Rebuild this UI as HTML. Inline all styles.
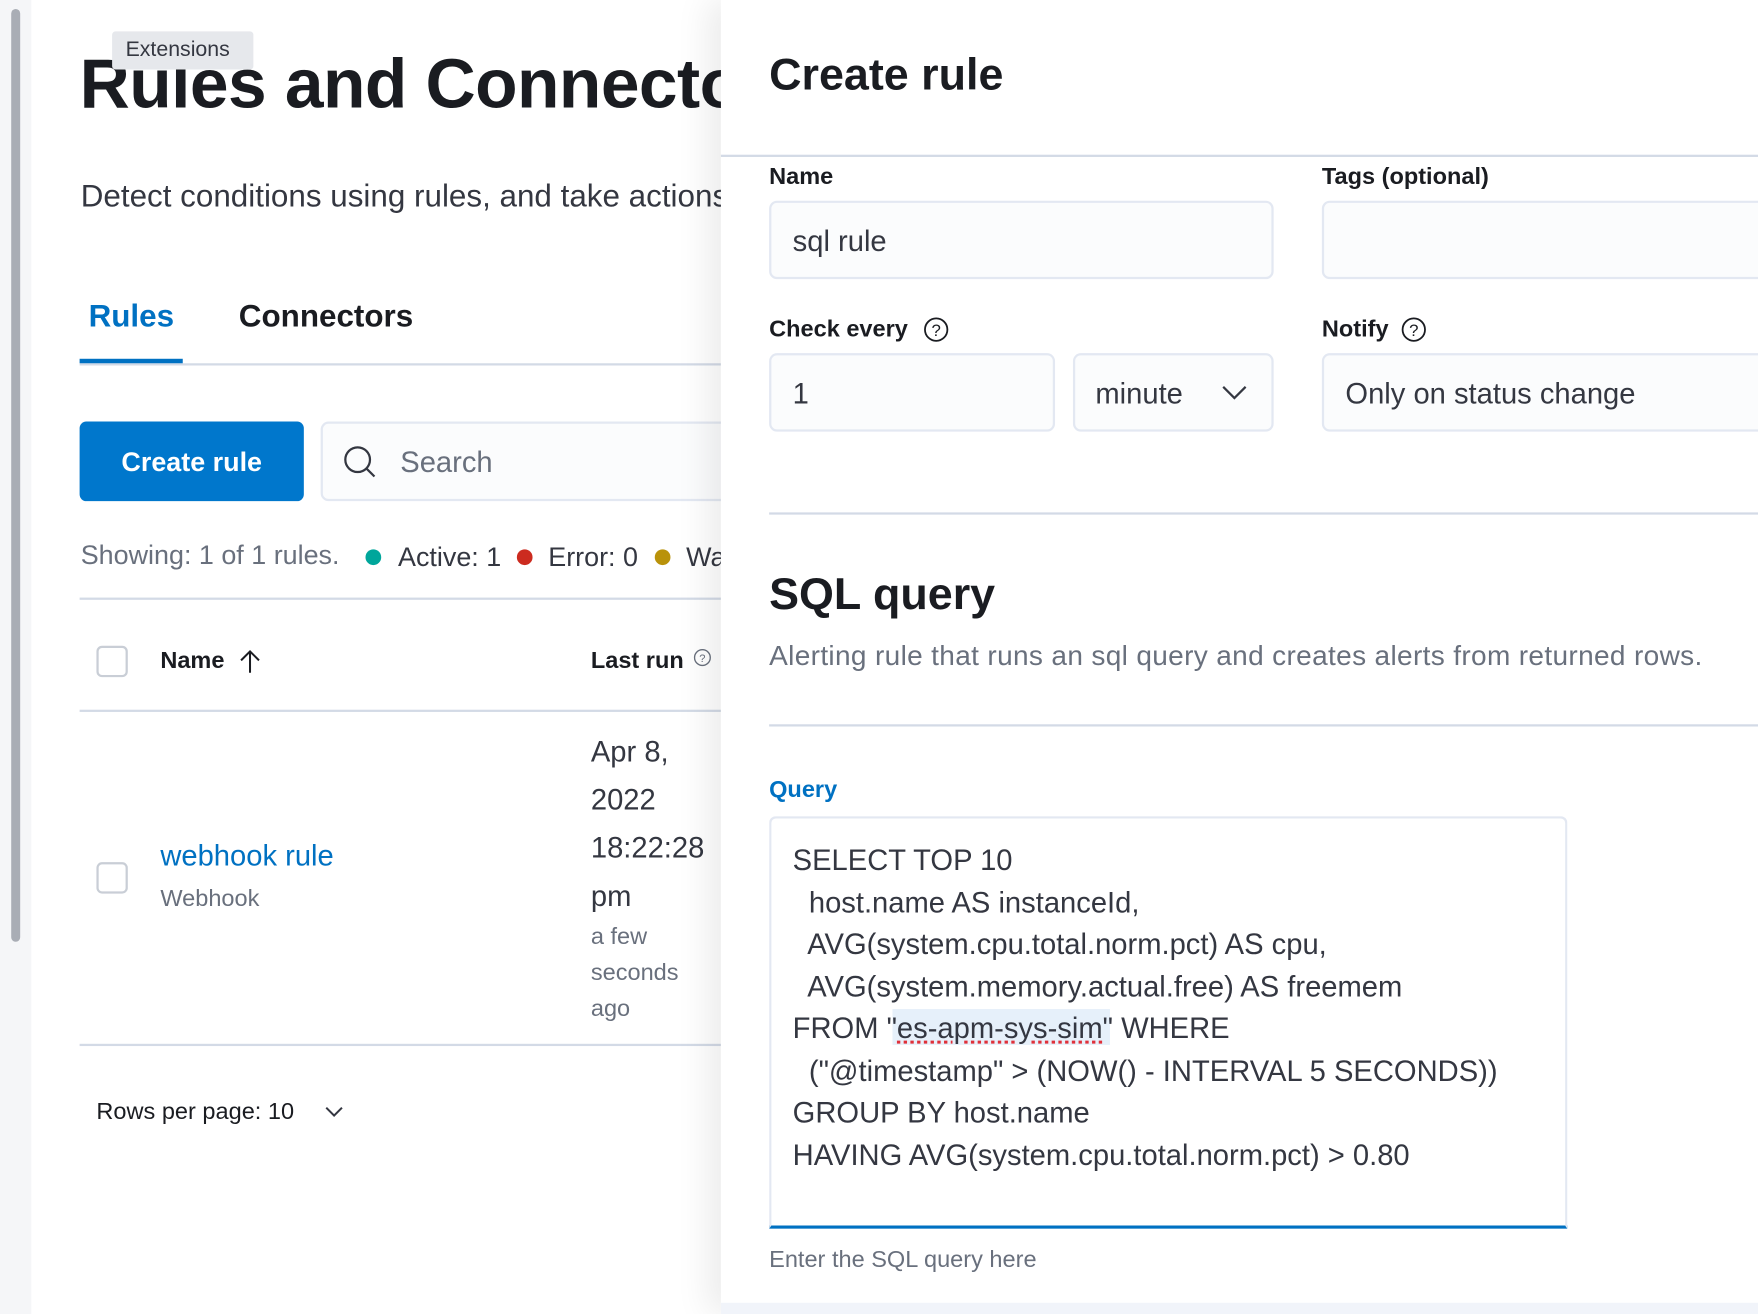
<!DOCTYPE html>
<html><head><meta charset="utf-8"><style>
*{box-sizing:border-box;margin:0;padding:0}
html,body{width:1758px;height:1314px;overflow:hidden;background:#fff}
body{font-family:"Liberation Sans",Arial,sans-serif;color:#1a1c21}
#w{position:absolute;left:0;top:0;width:1568px;height:1172px;transform:scale(1.12117);transform-origin:0 0;overflow:hidden}
.a{position:absolute;white-space:nowrap}
.line{position:absolute;height:2px;background:#d3dae6}
.inp{position:absolute;background:#fbfcfd;border:2px solid #e3e8f2;border-radius:7px}
.cb{position:absolute;width:28px;height:28px;border:2px solid #c9ced6;border-radius:5px;background:#fff}
.q{position:absolute;left:707px;font-size:26px;color:#343741}
</style></head><body><div id="w">
<div class="a" style="left:0;top:0;width:28px;height:1172px;background:#f5f6f8"></div>
<div class="a" style="left:10px;top:8px;width:8px;height:832px;background:#a9adb5;border-radius:4px"></div>
<div class="a" style="left:28px;top:0;width:615px;height:1172px;background:#fff"></div>

<div class="a" style="left:71px;top:40px;font-size:62px;font-weight:bold;letter-spacing:-0.5px">Rules and Connectors</div>
<div class="a" style="left:100px;top:28px;width:126px;height:34px;background:#e6e8ec;border-radius:3px;font-size:19px;color:#343741;line-height:34px;padding-left:12px">Extensions</div>
<div class="a" style="left:72px;top:159px;font-size:28px;color:#343741">Detect conditions using rules, and take actions</div>
<div class="a" style="left:79px;top:266px;font-size:28px;font-weight:bold;color:#0071c2">Rules</div>
<div class="a" style="left:213px;top:266px;font-size:28px;font-weight:bold;color:#1a1c21">Connectors</div>
<div class="line" style="left:71px;top:324px;width:572px"></div>
<div class="a" style="left:71px;top:320px;width:92px;height:4px;background:#0071c2"></div>

<div class="a" style="left:71px;top:376px;width:200px;height:71px;background:#0077cc;border-radius:6px;color:#fff;font-size:24px;font-weight:bold;text-align:center;line-height:73px">Create rule</div>
<div class="inp" style="left:286px;top:376px;width:420px;height:71px"></div>
<svg class="a" style="left:305px;top:396px" width="32" height="32" viewBox="0 0 32 32"><circle cx="14" cy="14" r="11" fill="none" stroke="#343741" stroke-width="2"/><path d="M22 22l7 7" stroke="#343741" stroke-width="2"/></svg>
<div class="a" style="left:357px;top:397px;font-size:26px;color:#69707d">Search</div>

<div class="a" style="left:72px;top:482px;font-size:24px;color:#69707d">Showing: 1 of 1 rules.</div>
<div class="a" style="left:326px;top:490px;width:14px;height:14px;border-radius:50%;background:#00a69b"></div>
<div class="a" style="left:355px;top:484px;font-size:24px;color:#343741">Active: 1</div>
<div class="a" style="left:461px;top:490px;width:14px;height:14px;border-radius:50%;background:#cc2b1f"></div>
<div class="a" style="left:489px;top:484px;font-size:24px;color:#343741">Error: 0</div>
<div class="a" style="left:584px;top:490px;width:14px;height:14px;border-radius:50%;background:#b9920a"></div>
<div class="a" style="left:612px;top:484px;font-size:24px;color:#343741">Warning</div>

<div class="line" style="left:71px;top:533px;width:572px"></div>
<div class="cb" style="left:86px;top:576px"></div>
<div class="a" style="left:143px;top:578px;font-size:21px;font-weight:bold">Name</div>
<svg class="a" style="left:212px;top:578px" width="22" height="24" viewBox="0 0 22 24"><path d="M11 22V3M3 11l8-8 8 8" fill="none" stroke="#1a1c21" stroke-width="1.8"/></svg>
<div class="a" style="left:527px;top:578px;font-size:21px;font-weight:bold">Last run</div>
<svg class="a" style="left:618px;top:578px" width="17" height="17" viewBox="0 0 17 17"><circle cx="8.5" cy="8.5" r="7" fill="none" stroke="#69707d" stroke-width="1.2"/><text x="8.5" y="12.5" font-size="10" text-anchor="middle" fill="#69707d" font-family="Liberation Sans">?</text></svg>
<div class="line" style="left:71px;top:633px;width:572px"></div>

<div class="cb" style="left:86px;top:769px"></div>
<div class="a" style="left:143px;top:748px;font-size:26px;color:#0071c2">webhook rule</div>
<div class="a" style="left:143px;top:790px;font-size:21px;color:#69707d">Webhook</div>
<div class="a" style="left:527px;top:649px;font-size:26px;color:#343741;line-height:43px;white-space:normal;width:120px">Apr 8,<br>2022<br>18:22:28<br>pm</div>
<div class="a" style="left:527px;top:820px;font-size:21px;color:#69707d;line-height:32px">a few<br>seconds<br>ago</div>
<div class="line" style="left:71px;top:931px;width:572px"></div>
<div class="a" style="left:86px;top:980px;font-size:21px;color:#1a1c21">Rows per page: 10</div>
<svg class="a" style="left:289px;top:984px" width="18" height="14" viewBox="0 0 18 14"><path d="M2 4l7 7 7-7" fill="none" stroke="#343741" stroke-width="1.8"/></svg>

<div class="a" style="left:643px;top:0;width:925px;height:1172px;background:#fff;box-shadow:-12px 0 28px rgba(0,0,0,0.08)"></div>
<div class="a" style="left:643px;top:1162px;width:925px;height:10px;background:#f1f4fa"></div>
<div class="a" style="left:686px;top:45px;font-size:40px;font-weight:bold">Create rule</div>
<div class="line" style="left:643px;top:138px;width:925px"></div>
<div class="a" style="left:686px;top:146px;font-size:21px;font-weight:bold">Name</div>
<div class="a" style="left:1179px;top:146px;font-size:21px;font-weight:bold">Tags (optional)</div>
<div class="inp" style="left:686px;top:179px;width:450px;height:70px"></div>
<div class="a" style="left:707px;top:200px;font-size:26px;color:#343741">sql rule</div>
<div class="inp" style="left:1179px;top:179px;width:420px;height:70px"></div>

<div class="a" style="left:686px;top:282px;font-size:21px;font-weight:bold">Check every</div>
<svg class="a" style="left:823px;top:282px" width="24" height="24" viewBox="0 0 24 24"><circle cx="12" cy="12" r="10" fill="none" stroke="#1a1c21" stroke-width="1.6"/><text x="12" y="17.5" font-size="15" text-anchor="middle" fill="#1a1c21" font-family="Liberation Sans">?</text></svg>
<div class="a" style="left:1179px;top:282px;font-size:21px;font-weight:bold">Notify</div>
<svg class="a" style="left:1249px;top:282px" width="24" height="24" viewBox="0 0 24 24"><circle cx="12" cy="12" r="10" fill="none" stroke="#1a1c21" stroke-width="1.6"/><text x="12" y="17.5" font-size="15" text-anchor="middle" fill="#1a1c21" font-family="Liberation Sans">?</text></svg>
<div class="inp" style="left:686px;top:315px;width:255px;height:70px"></div>
<div class="a" style="left:707px;top:336px;font-size:26px;color:#343741">1</div>
<div class="inp" style="left:957px;top:315px;width:179px;height:70px"></div>
<div class="a" style="left:977px;top:336px;font-size:26px;color:#343741">minute</div>
<svg class="a" style="left:1088px;top:342px" width="26" height="16" viewBox="0 0 26 16"><path d="M3 3l10 10 10-10" fill="none" stroke="#343741" stroke-width="2"/></svg>
<div class="inp" style="left:1179px;top:315px;width:420px;height:70px"></div>
<div class="a" style="left:1200px;top:336px;font-size:26px;color:#343741">Only on status change</div>

<div class="line" style="left:686px;top:457px;width:882px"></div>
<div class="a" style="left:686px;top:508px;font-size:40px;font-weight:bold">SQL query</div>
<div class="a" style="left:686px;top:571px;font-size:25px;color:#69707d;letter-spacing:0.3px">Alerting rule that runs an sql query and creates alerts from returned rows.</div>
<div class="line" style="left:686px;top:646px;width:882px"></div>
<div class="a" style="left:686px;top:693px;font-size:21px;font-weight:bold;color:#0071c2">Query</div>
<div class="a" style="left:686px;top:728px;width:712px;height:368px;background:#fff;border:2px solid #e3e8f2;border-bottom:3px solid #0071c2;border-radius:6px 6px 0 0"></div>
<div class="a" style="left:796px;top:900px;width:194px;height:32px;background:#e6f0fa"></div>
<div class="q" style="top:752px">SELECT TOP 10</div>
<div class="q" style="top:790px">&nbsp; host.name AS instanceId,</div>
<div class="q" style="top:827px">&nbsp; AVG(system.cpu.total.norm.pct) AS cpu,</div>
<div class="q" style="top:865px">&nbsp; AVG(system.memory.actual.free) AS freemem</div>
<div class="q" style="top:902px">FROM "<span style="text-decoration:underline dotted #e0303a">es-apm-sys-sim</span>" WHERE</div>
<div class="q" style="top:940px">&nbsp; ("@timestamp" &gt; (NOW() - INTERVAL 5 SECONDS))</div>
<div class="q" style="top:977px">GROUP BY host.name</div>
<div class="q" style="top:1015px">HAVING AVG(system.cpu.total.norm.pct) &gt; 0.80</div>
<div class="a" style="left:686px;top:1112px;font-size:21px;color:#69707d">Enter the SQL query here</div>
</div></body></html>
